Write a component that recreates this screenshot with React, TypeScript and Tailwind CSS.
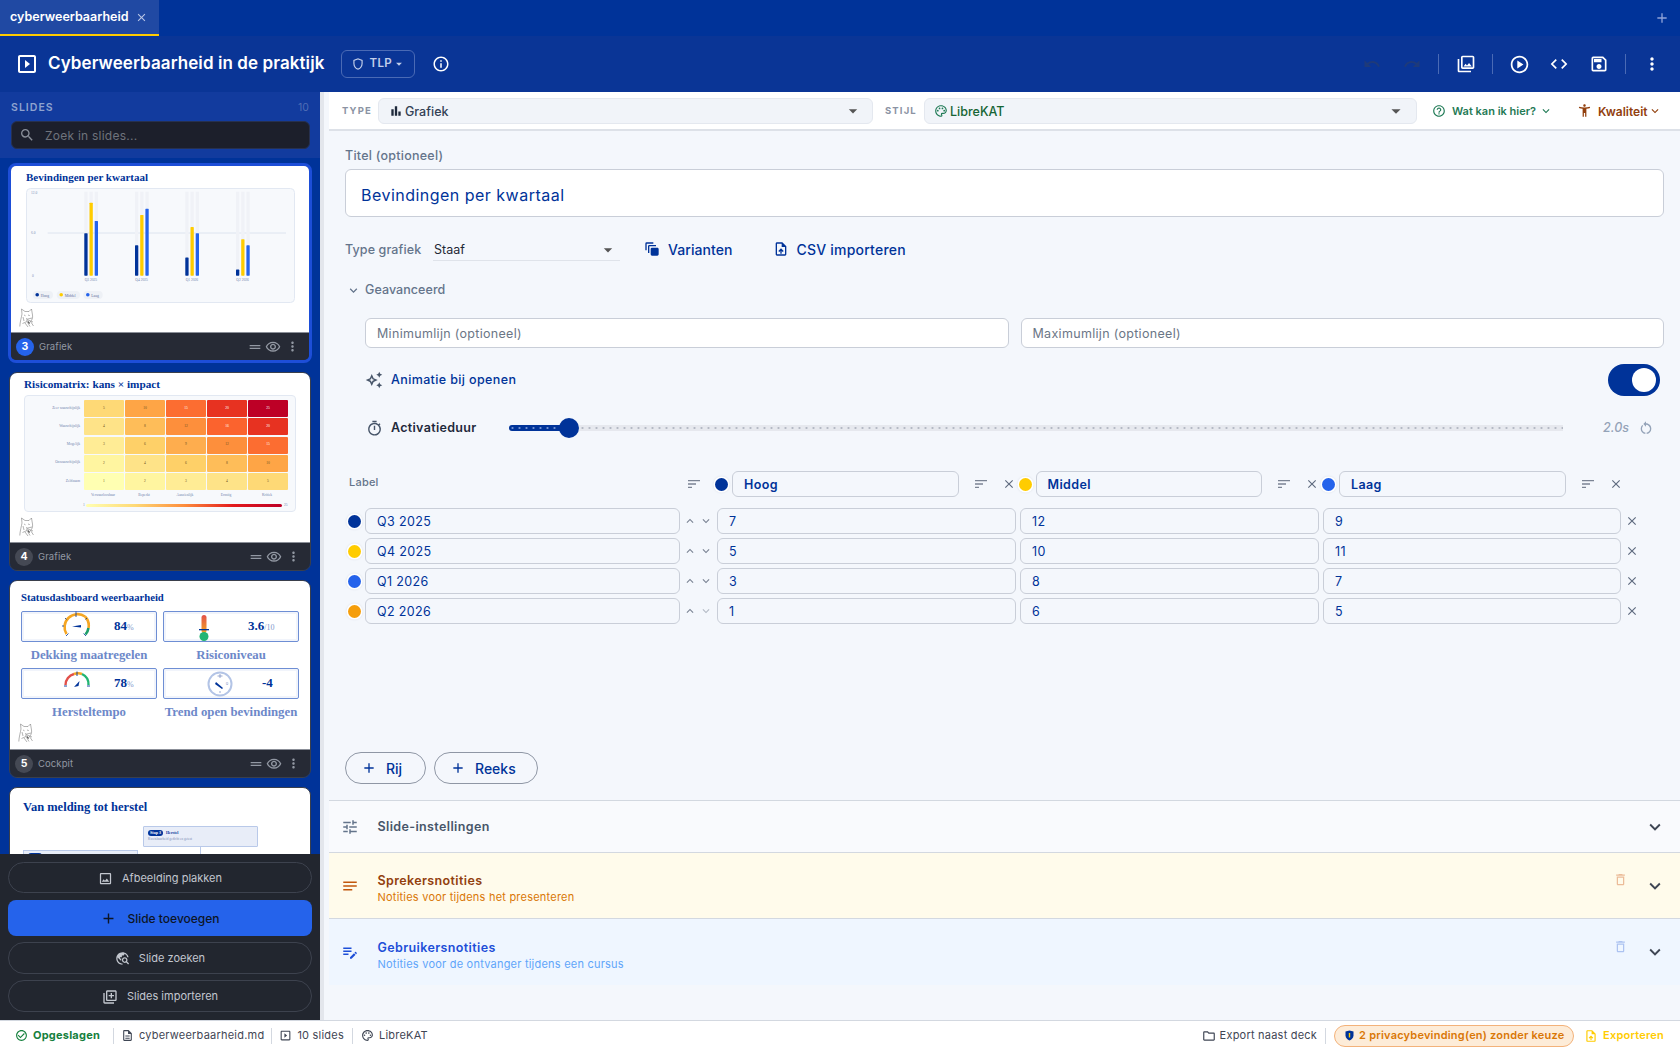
import React from "react";
import {
  MdOutlineSlideshow, MdOutlineShield, MdInfoOutline, MdUndo, MdRedo, MdOutlinePhotoLibrary, MdOutlinePlayCircle, MdCode, MdOutlineSave,
  MdMoreVert, MdSearch, MdBarChart, MdOutlinePalette, MdHelpOutline, MdAccessibilityNew, MdExpandMore, MdAutoAwesomeMotion, MdOutlineUploadFile,
  MdOutlineAutoAwesome, MdOutlineTimer, MdRestartAlt, MdSort, MdClose, MdAdd, MdTune, MdNotes, MdEditNote, MdDeleteOutline, MdCheckCircleOutline,
  MdOutlineDescription, MdOutlineFolder, MdOutlineImage, MdTravelExplore, MdOutlineLibraryAdd, MdDragHandle, MdOutlineVisibility, MdKeyboardArrowUp,
  MdKeyboardArrowDown, MdArrowDropDown,
} from "react-icons/md";

const serif = "font-['Liberation_Serif',serif]";

function Cat() {
  return (
    <svg width="16" height="20" viewBox="0 0 16 20" fill="none" stroke="#555" strokeWidth="0.45">
      <path d="M3 6 L2.5 1 L6 3.5 L10 3.5 L12.5 1 L13.5 7 C14 10 13 12 11.5 13.5 L14.5 18 M3 6 C2.5 9 1 14 0.8 18.5 M5 7 L6.5 7.8 M9 7 L10.8 7.6 M7 10.5 L8.8 11.2 L7 12.5 M9 11 L13 10 M9 12 L14 14 M3.5 15.5 L8 13.5 L11 18.5 M6 15 L9 19 M4 9 L5 13" />
      <path d="M8 12 L11 15 L10 16 Z" fill="#333" stroke="none" />
    </svg>
  );
}

function CardFoot({ n, label, active }: { n: number; label: string; active?: boolean }) {
  return (
    <div className="h-[28px] shrink-0 bg-[#262a35] border-t border-[#8b8f98] flex items-center pl-[5px] pr-[9px] text-[#9298a3]">
      <div className={`w-[18px] h-[18px] rounded-full flex items-center justify-center text-[10.5px] font-bold text-white ${active ? "bg-[#2563eb]" : "bg-[#454954]"}`}>{n}</div>
      <span className="ml-[5px] pt-[1px] text-[9.5px] tracking-[0.01em]">{label}</span>
      <MdDragHandle className="ml-auto" size={16} />
      <MdOutlineVisibility className="ml-[2px]" size={16} />
      <MdMoreVert className="ml-[4px]" size={15} />
    </div>
  );
}

function BarThumb() {
  const groups = [
    { x: 58.3, v: [7, 12, 9], l: "Q3 2025" },
    { x: 109, v: [5, 10, 11], l: "Q4 2025" },
    { x: 159.3, v: [3, 8, 7], l: "Q1 2026" },
    { x: 210, v: [1, 6, 5], l: "Q2 2026" },
  ];
  const colors = ["#003399", "#ffcc00", "#2563eb"];
  return (
    <svg width="269" height="115" viewBox="0 0 269 115" className="block" fontFamily="Liberation Serif, serif">
      <rect x="0.5" y="0.5" width="268" height="114" rx="4" fill="#f7f9fc" stroke="#e2e8f2" />
      <text x="5" y="5.5" fontSize="3.5" fill="#7d8fb5">12.0</text>
      <text x="5" y="46" fontSize="3.5" fill="#7d8fb5">6.0</text>
      <text x="6" y="89" fontSize="3.5" fill="#7d8fb5">0</text>
      <line x1="21.7" y1="45" x2="260" y2="45" stroke="#d7e0ec" strokeWidth="0.8" />
      {groups.map((g) => (
        <g key={g.l}>
          {g.v.map((v, i) => (
            <g key={i}>
              <rect x={g.x + i * 5.2} y="3.7" width="3.3" height="84" fill="#f0f2f7" />
              <rect x={g.x + i * 5.2} y={87.7 - v * 6.08} width="3.3" height={v * 6.08} rx="0.6" fill={colors[i]} />
            </g>
          ))}
          <text x={g.x + 6.6} y="93" textAnchor="middle" fontSize="3.6" fill="#6f83ad">{g.l}</text>
        </g>
      ))}
      {[
        { x: 6.7, w: 20.3, c: "#003399", t: "Hoog" },
        { x: 30.7, w: 23.3, c: "#ffcc00", t: "Middel" },
        { x: 57.3, w: 19.4, c: "#2563eb", t: "Laag" },
      ].map((p) => (
        <g key={p.t}>
          <rect x={p.x} y="103" width={p.w} height="8" rx="4" fill="#eef1f6" />
          <circle cx={p.x + 4.5} cy="106.7" r="1.8" fill={p.c} />
          <text x={p.x + 8} y="108.5" fontSize="3.8" fill="#5d6f9c">{p.t}</text>
        </g>
      ))}
    </svg>
  );
}

const heat: Record<number, string> = {
  1: "#ffffb2", 2: "#fff5a0", 3: "#ffec95", 4: "#fee388", 5: "#fed976", 6: "#fed068", 8: "#febd59", 9: "#fead4e", 10: "#fea546", 12: "#fd8f3c",
  15: "#fc6d31", 16: "#fb632e", 20: "#e73221", 25: "#bd0026",
};

function Heatmap() {
  const rows = [
    ["Zeer waarschijnlijk", [5, 10, 15, 20, 25]],
    ["Waarschijnlijk", [4, 8, 12, 16, 20]],
    ["Mogelijk", [3, 6, 9, 12, 15]],
    ["Onwaarschijnlijk", [2, 4, 6, 8, 10]],
    ["Zeldzaam", [1, 2, 3, 4, 5]],
  ] as [string, number[]][];
  return (
    <div className={`w-[272px] h-[117px] bg-[#f7f9fc] border border-[#e2e8f2] rounded-[4px] pt-[4px] pl-[58px] ${serif} text-[3.6px] leading-none`}>
      <div className="flex flex-col gap-[1.3px]">
        {rows.map(([l, vs]) => (
          <div key={l} className="flex items-center h-[17px] gap-[1px]">
            <div className="w-0 relative">
              <span className="block absolute right-[3px] -top-[2px] whitespace-nowrap text-[#6f83ad]">{l}</span>
            </div>
            {vs.map((v, i) => (
              <div key={i} className="w-[40px] h-[17px] rounded-[1px] flex items-center justify-center" style={{ background: heat[v], color: v >= 15 ? "#fff" : "#6b5320" }}>
                {v}
              </div>
            ))}
          </div>
        ))}
      </div>
      <div className="flex gap-[1px] mt-[4px] text-[#6f83ad]">
        {["Verwaarloosbaar", "Beperkt", "Aanzienlijk", "Ernstig", "Kritiek"].map((t) => (
          <div key={t} className="w-[40px] text-center">{t}</div>
        ))}
      </div>
      <div className="flex items-center mt-[6px] text-[#6f83ad]">
        <span className="w-[3px]">1</span>
        <div className="w-[196px] h-[3px] rounded-full bg-[linear-gradient(90deg,#ffffb2,#fed976,#fd8d3c,#e31a1c,#bd0026)]" />
        <span className="ml-[2px]">25</span>
      </div>
    </div>
  );
}

function Gauge1() {
  return (
    <svg width="30" height="30" viewBox="0 0 30 30" fill="none">
      <path d="M5.5 23 A13 13 0 0 1 24 5.5" stroke="#f5a623" strokeWidth="2.6" />
      <path d="M24 5.5 A13 13 0 0 1 27.5 17" stroke="#f5a623" strokeWidth="2.6" />
      <path d="M27.5 17 A13 13 0 0 1 24.5 23.5" stroke="#1e9e6a" strokeWidth="2.6" />
      <path d="M15 0.5V6M5 25l2.5-2.5M25 25l-2.5-2.5M1 15h2M4 7l1.5 1.5M26 7l-1.5 1.5" stroke="#003399" strokeWidth="0.8" />
      <path d="M11 15.5 L20 14 L20 16.5 Z" fill="#003399" />
    </svg>
  );
}
function Gauge2() {
  return (
    <svg width="30" height="22" viewBox="0 0 30 22" fill="none">
      <path d="M3.5 16 A11.5 11.5 0 0 1 12 5" stroke="#e2504a" strokeWidth="2.4" />
      <path d="M12 5 A11.5 11.5 0 0 1 20 5" stroke="#f5a623" strokeWidth="2.4" />
      <path d="M20 5 A11.5 11.5 0 0 1 26.5 16" stroke="#22b573" strokeWidth="2.4" />
      <path d="M15 2.5V7M2 17h3M25 17h3" stroke="#003399" strokeWidth="0.9" />
      <path d="M12 18 L17.5 12 L16.5 17 Z" fill="#003399" />
    </svg>
  );
}
function Thermo() {
  return (
    <svg width="14" height="28" viewBox="0 0 14 28" fill="none">
      <defs>
        <linearGradient id="th" x1="0" y1="0" x2="0" y2="1">
          <stop offset="0" stopColor="#e2504a" />
          <stop offset="1" stopColor="#f5a623" />
        </linearGradient>
      </defs>
      <rect x="4.5" y="1" width="5" height="18" rx="2.5" fill="url(#th)" />
      <circle cx="7" cy="22.5" r="4.5" fill="#22b573" />
      <rect x="2" y="15" width="10" height="1.3" fill="#003399" />
    </svg>
  );
}
function Clock() {
  return (
    <svg width="28" height="28" viewBox="0 0 28 28" fill="none">
      <circle cx="14" cy="14" r="11.5" stroke="#b3c4e6" strokeWidth="2" />
      <path d="M14 4v4M11.5 6h5M14 21v2" stroke="#7d92c4" strokeWidth="0.8" />
      <path d="M10 12 L17 18 L16 19 L9 14 Z" fill="#003399" />
      <text x="21" y="15" fontSize="4" fill="#7d92c4" textAnchor="middle">0</text>
    </svg>
  );
}

function Tile({ children, label }: { children: React.ReactNode; label: string }) {
  return (
    <div className="w-[136px] flex flex-col">
      <div className="h-[31px] border-[1.5px] border-[#6e8ed4] rounded-[2px] flex items-center relative shadow-[inset_0_0_0_2px_#f1f4fb]">{children}</div>
      <div className={`mt-[4px] h-[19px] whitespace-nowrap text-center text-[12.8px] leading-[19px] font-bold text-[#6d88c9] ${serif}`}>{label}</div>
    </div>
  );
}

function Val({ v, u, pl }: { v: string; u?: string; pl: string }) {
  return (
    <div className={`absolute top-[5px] ${pl} whitespace-nowrap ${serif} text-[13px] leading-[18px] font-bold text-[#003399]`}>
      {v}
      {u && <span className="font-normal text-[8px] text-[#8097cc]">{u}</span>}
    </div>
  );
}

function SideBtn({ icon, label }: { icon: React.ReactNode; label: string }) {
  return (
    <div className="h-[32px] rounded-full border-[1.5px] border-[#3d424e] flex items-center justify-center gap-[9px] pt-[1px] text-[11px] text-[#c3c7cf]">
      {icon}
      <span>{label}</span>
    </div>
  );
}

function Sidebar() {
  return (
    <aside className="w-[320px] shrink-0 flex flex-col min-h-0">
      <div className="h-[66px] shrink-0 bg-[#123b9e] px-[11px] pt-[9px]">
        <div className="flex justify-between items-center h-[14px] text-[10.5px] font-semibold tracking-[0.1em] text-[#8ea3cf]">
          <span>SLIDES</span>
          <span className="font-normal tracking-normal text-[#4f6db5]">10</span>
        </div>
        <div className="mt-[6px] h-[28px] w-[299px] rounded-[6px] bg-[#1c1f2b] border border-[#26304f] flex items-center pl-[7px]">
          <MdSearch size={16} className="text-[#8a8f99]" />
          <span className="ml-[10px] pt-[2px] text-[12px] tracking-[0.02em] text-[#6f737c]">Zoek in slides...</span>
        </div>
      </div>
      <div className="flex-1 min-h-0 overflow-hidden bg-[#003399] pt-[5px] flex flex-col gap-[9px]">
        <div className="ml-[8px] w-[304px] h-[200px] shrink-0 rounded-[8px] border-[3px] border-[#1d4ed8] overflow-hidden flex flex-col">
          <div className="flex-1 bg-white pl-[15px] min-h-0">
            <div className={`h-[22px] pt-[2px] text-[11px] leading-[18px] font-bold text-[#003399] ${serif}`}>Bevindingen per kwartaal</div>
            <BarThumb />
            <div className="-ml-[7px] mt-[5px]"><Cat /></div>
          </div>
          <CardFoot n={3} label="Grafiek" active />
        </div>
        <div className="ml-[9px] w-[302px] h-[199px] shrink-0 rounded-[8px] border border-[#3a3f4b] overflow-hidden flex flex-col">
          <div className="flex-1 bg-white pl-[14px] min-h-0">
            <div className={`h-[22px] pt-[2px] text-[11.25px] leading-[18px] font-bold text-[#003399] ${serif}`}>Risicomatrix: kans × impact</div>
            <Heatmap />
            <div className="-ml-[5px] mt-[5px]"><Cat /></div>
          </div>
          <CardFoot n={4} label="Grafiek" />
        </div>
        <div className="ml-[9px] w-[302px] h-[198px] shrink-0 rounded-[8px] border border-[#3a3f4b] overflow-hidden flex flex-col">
          <div className="flex-1 bg-white pl-[11px] pt-[8px] min-h-0">
            <div className={`h-[22px] text-[10.7px] leading-[16px] font-bold text-[#003399] ${serif}`}>Statusdashboard weerbaarheid</div>
            <div className="flex flex-wrap gap-x-[6px] gap-y-[3px] w-[280px]">
              <Tile label="Dekking maatregelen">
                <div className="absolute left-[39px] -top-[1px]"><Gauge1 /></div>
                <Val v="84" u="%" pl="left-[92px]" />
              </Tile>
              <Tile label="Risiconiveau">
                <div className="absolute left-[33px] top-[2px]"><Thermo /></div>
                <Val v="3.6" u="/10" pl="left-[84px]" />
              </Tile>
              <Tile label="Hersteltempo">
                <div className="absolute left-[40px] top-0"><Gauge2 /></div>
                <Val v="78" u="%" pl="left-[92px]" />
              </Tile>
              <Tile label="Trend open bevindingen">
                <div className="absolute left-[42px] top-[1px]"><Clock /></div>
                <Val v="-4" pl="left-[98px]" />
              </Tile>
            </div>
            <div className="-ml-[3px] mt-[1px]"><Cat /></div>
          </div>
          <CardFoot n={5} label="Cockpit" />
        </div>
        <div className="ml-[9px] w-[302px] h-[199px] shrink-0 rounded-[8px] border border-[#3a3f4b] overflow-hidden bg-white relative">
          <div className={`ml-[13px] mt-[11px] text-[12.5px] leading-[16px] font-bold text-[#003399] ${serif}`}>Van melding tot herstel</div>
          <div className="absolute left-[133px] top-[38px] w-[115px] h-[21px] bg-[#e8edf8] border border-[#b9c9e9] rounded-[1px] pl-[4px] pt-[2px]">
            <div className={`flex items-center gap-[3px] text-[4px] leading-[7px] font-bold text-[#003399] ${serif}`}>
              <span className="w-[15px] h-[6px] rounded-full bg-[#003399] text-white text-center leading-[6px]">Stap 3</span>
              <span>Herstel</span>
            </div>
            <div className={`text-[3.4px] mt-[1px] text-[#7d8fb5] ${serif}`}>Kwetsbaarheid gedicht en getest</div>
          </div>
          <div className="absolute left-[190px] top-[59px] w-px h-[10px] bg-[#b9c9e9]" />
          <div className="absolute left-[13px] top-[62px] w-[115px] h-[21px] bg-[#e8edf8] border border-[#b9c9e9] pl-[4px] pt-[2px]">
            <div className="w-[14px] h-[6px] rounded-full bg-[#003399]" />
          </div>
        </div>
      </div>
      <div className="h-[166px] shrink-0 bg-[#22262f] px-[8px] pt-[8px] flex flex-col">
        <div className="h-[31px] flex flex-col justify-center"><SideBtn icon={<MdOutlineImage size={15} />} label="Afbeelding plakken" /></div>
        <div className="mt-[7px] h-[36px] rounded-[8px] bg-[#2563eb] flex items-center justify-center gap-[10px] pt-[1px] text-[12px] font-medium text-[#0d1526]">
          <MdAdd size={17} /> Slide toevoegen
        </div>
        <div className="mt-[6px]"><SideBtn icon={<MdTravelExplore size={15} />} label="Slide zoeken" /></div>
        <div className="mt-[6px]"><SideBtn icon={<MdOutlineLibraryAdd size={16} />} label="Slides importeren" /></div>
      </div>
    </aside>
  );
}

function Field({ children, w, cls = "" }: { children: React.ReactNode; w: string; cls?: string }) {
  return (
    <div className={`${w} h-[26px] shrink-0 rounded-[6px] border-[1.5px] border-[#c9ced8] flex items-center pl-[11px] pt-[2px] text-[12.5px] tracking-[0.03em] text-[#003399] ${cls}`}>
      {children}
    </div>
  );
}

function Dot({ c, cls = "" }: { c: string; cls?: string }) {
  return <div className={`w-[13px] h-[13px] shrink-0 rounded-full ring-[1.5px] ring-white shadow-[0_0_2px_2px_#e3e7ef] ${cls}`} style={{ background: c }} />;
}

function Row({ l, c, v, dim }: { l: string; c: string; v: string[]; dim?: boolean }) {
  return (
    <div className="flex items-center h-[26px]">
      <Dot c={c} cls="ml-[2.5px]" />
      <Field w="w-[315px]" cls="ml-[4.5px]">{l}</Field>
      <MdKeyboardArrowUp size={14} className="ml-[3px] shrink-0 text-[#7b8494]" />
      <MdKeyboardArrowDown size={14} className={`ml-[2px] shrink-0 ${dim ? "text-[#b5bbc6]" : "text-[#7b8494]"}`} />
      <Field w="w-[298.5px]" cls="ml-[4px]">{v[0]}</Field>
      <Field w="w-[298.5px]" cls="ml-[4.5px]">{v[1]}</Field>
      <Field w="w-[298px]" cls="ml-[4.5px]">{v[2]}</Field>
      <MdClose size={14} className="ml-[4px] shrink-0 text-[#5f6b7f]" />
    </div>
  );
}

function Series({ name, c, ml }: { name: string; c: string; ml: string }) {
  return (
    <>
      <Dot c={c} cls={ml} />
      <div className="ml-[4px] w-[226.5px] h-[26px] shrink-0 rounded-[6px] border-[1.5px] border-[#c9ced8] flex items-center pl-[11px] pt-[2px] text-[12.5px] font-semibold tracking-[0.03em] text-[#003399]">{name}</div>
      <MdSort size={16} className="ml-[14px] shrink-0 text-[#7b8494]" />
      <MdClose size={14} className="ml-[13px] shrink-0 text-[#5f6b7f]" />
    </>
  );
}

function Editor() {
  return (
    <main className="flex-1 min-w-0 flex flex-col bg-[#f4f7fc] min-h-0">
      <div className="h-[39px] shrink-0 bg-white border-b-2 border-[#dde1e8] flex items-center pl-[13px]">
        <span className="w-[35px] pt-[2px] text-[9.5px] font-bold tracking-[0.12em] text-[#8b93a3]">TYPE</span>
        <div className="ml-[1px] w-[495px] h-[26px] rounded-[6px] bg-[#f1f4f9] border border-[#e4e8ef] flex items-center pl-[10px] pr-[9px] text-[12.5px] font-medium text-[#334155]">
          <MdBarChart size={14} className="text-[#1e293b]" />
          <span className="ml-[2px] pt-[3px]">Grafiek</span>
          <MdArrowDropDown size={20} className="ml-auto text-[#555]" />
        </div>
        <span className="ml-[12px] w-[38px] pt-[2px] text-[9.5px] font-bold tracking-[0.12em] text-[#8b93a3]">STIJL</span>
        <div className="ml-[1px] w-[493px] h-[26px] rounded-[6px] bg-[#f1f4f9] border border-[#e4e8ef] flex items-center pl-[9px] pr-[9px] text-[12.5px] font-medium text-[#166534]">
          <MdOutlinePalette size={14} className="text-[#1f7a55]" />
          <span className="ml-[2px] pt-[3px]">LibreKAT</span>
          <MdArrowDropDown size={22} className="ml-auto text-[#555]" />
        </div>
        <div className="ml-[15px] flex items-center text-[11px] font-semibold text-[#1f7a55]">
          <MdHelpOutline size={14} />
          <span className="ml-[6px] pt-[2px]">Wat kan ik hier?</span>
          <MdExpandMore size={14} className="ml-[3px]" />
        </div>
        <div className="ml-[24px] flex items-center text-[12px] font-semibold text-[#92400e]">
          <MdAccessibilityNew size={15} />
          <span className="ml-[6px] pt-[2px]">Kwaliteit</span>
          <MdExpandMore size={14} />
        </div>
      </div>
      <div className="flex-1 min-h-0 px-4 flex flex-col">
        <div className="mt-[17px] h-[16px] text-[12.5px] leading-[16px] font-medium tracking-[0.02em] text-[#64748b]">Titel (optioneel)</div>
        <div className="mt-[5px] h-[48px] rounded-[6px] border-[1.5px] border-[#c9ced8] bg-white flex items-center pl-[15px] pt-[4px] text-[16px] tracking-[0.03em] text-[#003399]">Bevindingen per kwartaal</div>
        <div className="mt-[20px] h-[24px] flex items-center">
          <span className="w-[88px] pt-[2px] text-[12.5px] font-medium text-[#64748b] tracking-[0.01em]">Type grafiek</span>
          <div className="w-[187px] h-[24px] border-b-[1.5px] border-[#dfe3ea] flex items-center pt-[3px] pl-[1px] text-[12.5px] text-[#1f2937]">
            Staaf
            <MdArrowDropDown size={20} className="ml-auto mr-[2px] text-[#555]" />
          </div>
          <MdAutoAwesomeMotion size={16} className="ml-[24px] text-[#003399]" />
          <span className="ml-[8px] text-[14px] font-medium tracking-[0.005em] text-[#003399]">Varianten</span>
          <MdOutlineUploadFile size={16} className="ml-[40px] text-[#003399]" />
          <span className="ml-[8px] text-[14px] font-medium tracking-[0.015em] text-[#003399]">CSV importeren</span>
        </div>
        <div className="mt-[19px] h-[20px] flex items-center text-[12.5px] font-medium tracking-[0.005em] text-[#64748b]">
          <MdExpandMore size={15} className="ml-[1px]" />
          <span className="ml-[4px]">Geavanceerd</span>
        </div>
        <div className="mt-[18px] ml-[20px] flex gap-[12px]">
          {["Minimumlijn (optioneel)", "Maximumlijn (optioneel)"].map((t) => (
            <div key={t} className="w-[643.5px] h-[30px] rounded-[6px] border-[1.5px] border-[#c9ced8] bg-white flex items-center pl-[11px] pt-[2px] text-[12.5px] tracking-[0.025em] text-[#6b7686]">{t}</div>
          ))}
        </div>
        <div className="mt-[16px] h-[32px] flex items-center">
          <MdOutlineAutoAwesome size={18} className="ml-[20px] text-[#475569]" />
          <span className="ml-[8px] text-[12.5px] font-medium tracking-[0.03em] text-[#003399]">Animatie bij openen</span>
          <div className="ml-auto w-[52px] h-[32px] rounded-full bg-[#003399] flex items-center justify-end pr-[4px] mr-[4px]">
            <div className="w-[24px] h-[24px] rounded-full bg-white" />
          </div>
        </div>
        <div className="mt-[16px] h-[32px] flex items-center">
          <MdOutlineTimer size={17} className="ml-[21px] text-[#475569]" />
          <span className="ml-[8px] w-[118px] text-[12.5px] font-semibold tracking-[0.025em] text-[#1e293b]">Activatieduur</span>
          <div className="w-[52px] h-[6px] rounded-l-full bg-[#003399] bg-[radial-gradient(circle,#6f8fd0_1px,transparent_1.2px)] bg-size-[7px_6px]" />
          <div className="-ml-[2px] w-[20px] h-[20px] rounded-full bg-[#003399] shrink-0" />
          <div className="w-[984px] h-[6px] bg-[#e6e8ee] bg-[radial-gradient(circle,#b4b9c4_1px,transparent_1.2px)] bg-size-[7px_6px]" />
          <span className="ml-[40px] w-[26px] text-[12.5px] italic font-medium text-[#94a3b8]">2.0s</span>
          <MdRestartAlt size={16} className="ml-[9px] text-[#94a3b8]" />
        </div>
        <div className="mt-[27px] h-[26px] flex items-center">
          <span className="ml-[4px] w-[337px] -mt-[3px] text-[11px] font-medium tracking-[0.02em] text-[#64748b]">Label</span>
          <MdSort size={16} className="shrink-0 text-[#7b8494]" />
          <Series name="Hoog" c="#003399" ml="ml-[13px]" />
          <Series name="Middel" c="#ffcc00" ml="ml-[3px]" />
          <Series name="Laag" c="#2563eb" ml="ml-[3px]" />
        </div>
        <div className="mt-[11px] flex flex-col gap-[4px]">
          <Row l="Q3 2025" c="#003399" v={["7", "12", "9"]} />
          <Row l="Q4 2025" c="#ffcc00" v={["5", "10", "11"]} />
          <Row l="Q1 2026" c="#2563eb" v={["3", "8", "7"]} />
          <Row l="Q2 2026" c="#f59e0b" v={["1", "6", "5"]} dim />
        </div>
        <div className="mt-auto mb-[16px] flex gap-[8px]">
          <div className="w-[81px] h-[32px] rounded-full border-[1.5px] border-[#8f97a5] flex items-center pl-[15px] text-[14px] font-medium text-[#003399]">
            <MdAdd size={16} />
            <span className="ml-[9px]">Rij</span>
          </div>
          <div className="w-[104px] h-[32px] rounded-full border-[1.5px] border-[#8f97a5] flex items-center pl-[15px] text-[14px] font-medium text-[#003399]">
            <MdAdd size={16} />
            <span className="ml-[9px]">Reeks</span>
          </div>
        </div>
      </div>
      <div className="shrink-0 h-[52px] border-t border-[#d3d8e0] bg-[#f9fafd] flex items-center pl-[12px] pr-[16px]">
        <MdTune size={18} className="text-[#64748b]" />
        <span className="ml-[18.5px] pt-[2px] text-[12.5px] font-semibold tracking-[0.03em] text-[#475569]">Slide-instellingen</span>
        <MdExpandMore size={22} className="ml-auto -mr-[2px] text-[#3f4654]" />
      </div>
      <div className="shrink-0 h-[67px] border-t border-b border-[#d3d8e0] bg-[#fffbeb] flex items-center pl-[12px] pr-[16px]">
        <MdNotes size={18} className="text-[#c2570c]" />
        <div className="ml-[18.5px] pt-[6px] flex flex-col">
          <span className="text-[12.5px] leading-[17px] font-semibold tracking-[0.03em] text-[#92400e]">Sprekersnotities</span>
          <span className="text-[11px] leading-[17px] tracking-[0.02em] text-[#d97706]">Notities voor tijdens het presenteren</span>
        </div>
        <MdDeleteOutline size={15} className="ml-auto -mt-[12px] text-[#ecbc99]" />
        <MdExpandMore size={22} className="ml-[16px] -mr-[2px] text-[#3f4654]" />
      </div>
      <div className="shrink-0 h-[66px] bg-[#eff6ff] flex items-center pl-[12px] pr-[16px]">
        <MdEditNote size={18} className="text-[#1d4ed8]" />
        <div className="ml-[18.5px] pt-[8px] flex flex-col">
          <span className="text-[12.5px] leading-[17px] font-semibold tracking-[0.03em] text-[#1d4ed8]">Gebruikersnotities</span>
          <span className="text-[11px] leading-[17px] tracking-[0.02em] text-[#60a5fa]">Notities voor de ontvanger tijdens een cursus</span>
        </div>
        <MdDeleteOutline size={15} className="ml-auto -mt-[12px] text-[#adc3f1]" />
        <MdExpandMore size={22} className="ml-[16px] -mr-[2px] text-[#3f4654]" />
      </div>
      <div className="h-[35px] shrink-0" />
    </main>
  );
}

function Sep({ cls = "" }: { cls?: string }) {
  return <div className={`w-px h-[16px] bg-[#d3d8e0] ${cls}`} />;
}
function HeadSep() {
  return <div className="w-px h-[20px] bg-[#4a6ab5]" />;
}

export default function App() {
  return (
    <div className="w-[1680px] h-[1050px] flex flex-col overflow-hidden font-['Inter',sans-serif]">
      <div className="h-9 shrink-0 bg-[#003399] flex items-stretch">
        <div className="w-[159px] bg-[#2049a3] border-b-2 border-[#ffcc00] flex items-center pl-[10px] text-white">
          <span className="text-[12.5px] font-semibold">cyberweerbaarheid</span>
          <MdClose size={13} className="ml-[6px] text-[#b9c6e6]" />
        </div>
        <MdAdd size={16} className="ml-auto mr-[10px] self-center text-[#8ea3d8]" />
      </div>
      <header className="h-14 shrink-0 bg-[#0a3596] flex items-center text-white pl-[15px]">
        <MdOutlineSlideshow size={24} />
        <span className="ml-[9px] text-[17px] font-semibold tracking-[0.005em]">Cyberweerbaarheid in de praktijk</span>
        <div className="ml-[17px] w-[74px] h-[28px] rounded-[6px] border border-[#4a6ab5] flex items-center pl-[9px] text-[#c3cfea]">
          <MdOutlineShield size={14} />
          <span className="ml-[4px] text-[11.5px] font-semibold tracking-[0.03em]">TLP</span>
          <MdArrowDropDown size={14} />
        </div>
        <MdInfoOutline size={18} className="ml-[17px]" />
        <MdUndo size={18} className="ml-[913px] text-[#1e3a7a]" />
        <MdRedo size={18} className="ml-[22px] text-[#1e3a7a]" />
        <div className="ml-[17px]"><HeadSep /></div>
        <MdOutlinePhotoLibrary size={20} className="ml-[17px]" />
        <div className="ml-[16px]"><HeadSep /></div>
        <MdOutlinePlayCircle size={21} className="ml-[16px]" />
        <MdCode size={20} className="ml-[19px]" />
        <MdOutlineSave size={20} className="ml-[20px]" />
        <div className="ml-[16px]"><HeadSep /></div>
        <MdMoreVert size={20} className="ml-[16px]" />
      </header>
      <div className="flex-1 min-h-0 flex">
        <Sidebar />
        <div className="w-[9px] shrink-0 bg-[#f4f7fc] flex">
          <div className="w-[4px] bg-[#e3e6ec]" />
        </div>
        <Editor />
      </div>
      <footer className="h-[30px] shrink-0 bg-white border-t border-[#d3d8e0] flex items-center pl-[15px] text-[11px] tracking-[0.02em] text-[#3f4654]">
        <MdCheckCircleOutline size={13} className="text-[#15803d]" />
        <span className="ml-[5px] font-bold text-[#15803d]">Opgeslagen</span>
        <Sep cls="ml-[13px]" />
        <MdOutlineDescription size={13} className="ml-[7px]" />
        <span className="ml-[5px]">cyberweerbaarheid.md</span>
        <Sep cls="ml-[7px]" />
        <MdOutlineSlideshow size={13} className="ml-[7px]" />
        <span className="ml-[5px]">10 slides</span>
        <Sep cls="ml-[8px]" />
        <MdOutlinePalette size={13} className="ml-[8px]" />
        <span className="ml-[5px]">LibreKAT</span>
        <MdOutlineFolder size={14} className="ml-auto" />
        <span className="ml-[4px]">Export naast deck</span>
        <Sep cls="ml-[8px]" />
        <div className="ml-[8px] h-[22px] w-[240px] rounded-full bg-[#fdecd8] border border-[#f3b27a] flex items-center pl-[10px] whitespace-nowrap font-semibold text-[#d97706]">
          <svg width="9" height="11" viewBox="0 0 9 11" className="shrink-0">
            <path d="M0.5 1.5 L4.5 0.5 L8.5 1.5 V5.5 C8.5 8 6.5 9.5 4.5 10.5 C2.5 9.5 0.5 8 0.5 5.5Z" fill="#003399" />
            <rect x="3.8" y="3" width="1.4" height="4.5" fill="#ffcc00" />
          </svg>
          <span className="ml-[5px]">2 privacybevinding(en) zonder keuze</span>
        </div>
        <MdOutlineUploadFile size={14} className="ml-[10px] text-[#ffcc00]" />
        <span className="ml-[5px] mr-[16px] font-semibold text-[#ffcc00]">Exporteren</span>
      </footer>
    </div>
  );
}
